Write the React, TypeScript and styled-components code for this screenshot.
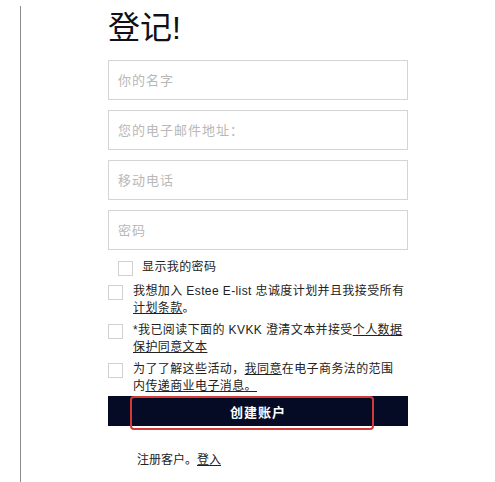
import styled, { createGlobalStyle } from "styled-components"

const GlobalStyle = createGlobalStyle`
  html, body {
    margin: 0;
    padding: 0;
    background: #ffffff;
  }
  body {
    font-family: "Liberation Sans", "Noto Sans CJK SC", sans-serif;
    color: #222222;
  }
`

const Style = {
  Page: styled.div`
    margin: 6px 0 0 20px;
    min-height: 476px;
    border-left: 1px solid #8c8c8c;
    box-sizing: border-box;
  `,
  Form: styled.div`
    width: 300px;
    margin-left: 87px;
    display: flex;
    flex-direction: column;
  `,
  Title: styled.h1`
    margin: 0 0 10px;
    font-size: 32px;
    line-height: 44px;
    font-weight: 400;
    color: #101018;
  `,
  Fields: styled.div`
    display: flex;
    flex-direction: column;
    gap: 10px;
  `,
  Input: styled.input`
    height: 40px;
    box-sizing: border-box;
    border: 1px solid #d4d4d4;
    padding: 0 9px;
    font-family: inherit;
    font-size: 13px;
    letter-spacing: 1px;
    color: #222;
    outline: none;
    &::placeholder {
      color: #b8b8b8;
    }
  `,
  CheckRow: styled.label<{ $indent?: boolean }>`
    display: flex;
    align-items: flex-start;
    gap: ${(p) => (p.$indent ? "9px" : "10px")};
    padding-left: ${(p) => (p.$indent ? "10px" : "0")};
    font-size: 12px;
    line-height: 17px;
    letter-spacing: 0.4px;
    color: #222;
  `,
  Box: styled.span`
    flex: none;
    width: 15px;
    height: 15px;
    box-sizing: border-box;
    margin-top: 2px;
    border: 1px solid #d0d0d0;
    background: #fff;
  `,
  ShowRow: styled.div`
    margin: 9px 0 7px;
  `,
  Agreements: styled.div`
    display: flex;
    flex-direction: column;
    gap: 5px;
  `,
  Link: styled.a`
    color: #222;
    text-decoration: underline;
  `,
  ButtonWrap: styled.div`
    position: relative;
    margin-top: 1px;
  `,
  Button: styled.button`
    width: 100%;
    height: 30px;
    border: none;
    background: #060b25;
    color: #ffffff;
    font-family: inherit;
    font-size: 13px;
    font-weight: 700;
    letter-spacing: 1px;
  `,
  Highlight: styled.div`
    position: absolute;
    left: 22px;
    top: 0;
    width: 244px;
    height: 34px;
    box-sizing: border-box;
    border: 2px solid #d23b35;
    border-radius: 4px;
    pointer-events: none;
  `,
  Footer: styled.p`
    margin: 26px 0 0 29px;
    font-size: 12px;
    line-height: 17px;
    color: #222;
  `,
}

export default function App() {
  return (
    <>
      <GlobalStyle />
      <Style.Page>
        <Style.Form>
          <Style.Title>登记!</Style.Title>
          <Style.Fields>
            <Style.Input placeholder="你的名字" />
            <Style.Input placeholder="您的电子邮件地址：" />
            <Style.Input placeholder="移动电话" />
            <Style.Input placeholder="密码" />
          </Style.Fields>
          <Style.ShowRow>
            <Style.CheckRow $indent>
              <Style.Box />
              <span>显示我的密码</span>
            </Style.CheckRow>
          </Style.ShowRow>
          <Style.Agreements>
            <Style.CheckRow>
              <Style.Box />
              <span>
                我想加入 Estee E-list 忠诚度计划并且我接受所有
                <Style.Link>计划条款</Style.Link>。
              </span>
            </Style.CheckRow>
            <Style.CheckRow>
              <Style.Box />
              <span>
                *我已阅读下面的 KVKK 澄清文本并接受
                <Style.Link>个人数据保护同意文本</Style.Link>
              </span>
            </Style.CheckRow>
            <Style.CheckRow>
              <Style.Box />
              <span>
                为了了解这些活动，<Style.Link>我同意</Style.Link>
                在电子商务法的范围
                <br />
                内<Style.Link>传递商业电子消息。</Style.Link>
              </span>
            </Style.CheckRow>
          </Style.Agreements>
          <Style.ButtonWrap>
            <Style.Button>创建账户</Style.Button>
            <Style.Highlight />
          </Style.ButtonWrap>
          <Style.Footer>
            注册客户。<Style.Link>登入</Style.Link>
          </Style.Footer>
        </Style.Form>
      </Style.Page>
    </>
  )
}
